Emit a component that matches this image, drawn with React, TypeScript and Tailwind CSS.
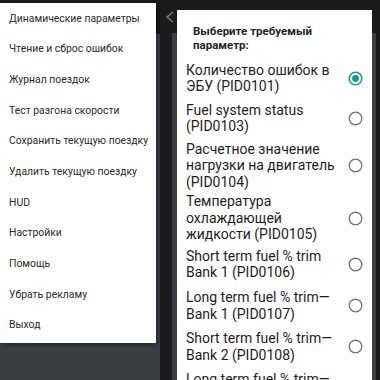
import React from 'react';

const menuItems = [
  'Динамические параметры',
  'Чтение и сброс ошибок',
  'Журнал поездок',
  'Тест разгона скорости',
  'Сохранить текущую поездку',
  'Удалить текущую поездку',
  'HUD',
  'Настройки',
  'Помощь',
  'Убрать рекламу',
  'Выход',
];

interface Option {
  lines: string[];
  h: number;
  checked?: boolean;
}

const options: Option[] = [
  { lines: ['Количество ошибок в', 'ЭБУ (PID0101)'], h: 40, checked: true },
  { lines: ['Fuel system status', '(PID0103)'], h: 40 },
  { lines: ['Расчетное значение', 'нагрузки на двигатель', '(PID0104)'], h: 55 },
  { lines: ['Температура', 'охлаждающей', 'жидкости (PID0105)'], h: 50 },
  { lines: ['Short term fuel % trim', 'Bank 1 (PID0106)'], h: 42 },
  { lines: ['Long term fuel % trim—', 'Bank 1 (PID0107)'], h: 41 },
  { lines: ['Short term fuel % trim—', 'Bank 2 (PID0108)'], h: 41 },
  { lines: ['Long term fuel % trim—', 'Bank 2 (PID0109)'], h: 41 },
];

const Radio: React.FC<{ checked?: boolean }> = ({ checked }) => (
  <svg width="15" height="15" viewBox="0 0 15 15" className="shrink-0">
    {checked ? (
      <>
        <circle cx="7.5" cy="7.5" r="6.3" fill="none" stroke="#1d9a86" strokeWidth="1.6" />
        <circle cx="7.5" cy="7.5" r="3.4" fill="#1d9a86" />
      </>
    ) : (
      <circle cx="7.5" cy="7.5" r="6.3" fill="none" stroke="#6f6f6f" strokeWidth="1.3" />
    )}
  </svg>
);

export default function App() {
  return (
    <div
      className="w-[380px] h-[380px] overflow-hidden flex bg-[#1c1d20]"
      style={{ fontFamily: 'Roboto, "Noto Sans", sans-serif' }}
    >
      {/* left phone: drawer menu */}
      <div className="relative w-[160px] h-full flex flex-col bg-[#3a3d42]">
        <div className="h-[34px] bg-[#1a1a1a]" />
        <div className="absolute left-0 top-[3px] w-[156px] h-[340px] bg-white shadow-[2px_2px_4px_rgba(0,0,0,0.35)] flex flex-col">
          {menuItems.map((item) => (
            <div key={item} className="h-[30.7px] flex items-center pl-[9px] text-[10.4px] text-[#2a2a2a] whitespace-nowrap">
              {item}
            </div>
          ))}
        </div>
      </div>

      {/* right phone: options dialog */}
      <div className="relative flex-1 h-full flex flex-col bg-[#1b1b1c]">
        <div className="h-[33px] bg-[#1a1a1a] flex items-center pl-[5px]">
          <svg width="10" height="12" viewBox="0 0 10 12">
            <path d="M8 1 L2 6 L8 11" fill="none" stroke="#7a7a7a" strokeWidth="1.6" />
          </svg>
        </div>
        <div className="flex-1 ml-[12px] mr-[4px] bg-[#3d3e41]" />
        <div className="absolute left-[17px] top-[10px] w-[195px] h-[400px] bg-white flex flex-col">
          <div className="pt-[14px] pl-[16px] text-[11.5px] leading-[14px] font-bold text-[#262626]">
            Выберите требуемый
            <br />
            параметр:
          </div>
          <div className="mt-[6px] flex flex-col">
            {options.map((o, i) => (
              <div key={i} className="flex items-center pl-[9px] pr-[9px]" style={{ height: o.h }}>
                <div className="flex-1 text-[14px] leading-[16.5px] text-[#1e1e1e] whitespace-nowrap">
                  {o.lines.map((l, j) => (
                    <div key={j}>{l}</div>
                  ))}
                </div>
                <Radio checked={o.checked} />
              </div>
            ))}
          </div>
        </div>
      </div>
    </div>
  );
}
